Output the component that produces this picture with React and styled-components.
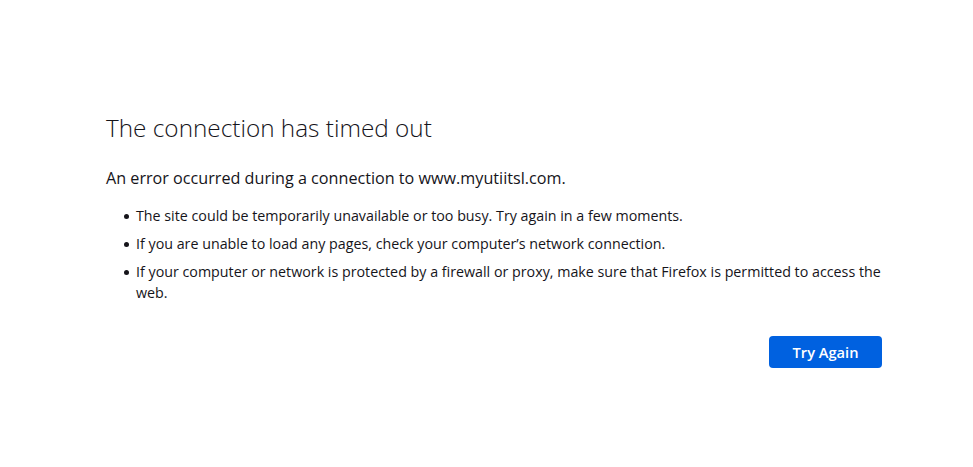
import React from "react";
import styled, { createGlobalStyle } from "styled-components";

const GlobalStyle = createGlobalStyle`
  html, body { margin: 0; padding: 0; background: #ffffff; }
  body {
    font-family: "Open Sans", "Noto Sans", sans-serif;
    color: #15141a;
  }
`;

const Page = styled.main`
  padding: 112px 0 0 106px;
`;

const Container = styled.div`
  width: 776px;
  display: flex;
  flex-direction: column;
`;

const Title = styled.h1`
  margin: 0;
  font-size: 24.34px;
  line-height: 32px;
  font-weight: 300;
  color: #15141a;
`;

const Subtitle = styled.p`
  margin: 23px 0 0;
  font-size: 16.17px;
  line-height: 22px;
  font-weight: 400;
`;

const List = styled.ul`
  margin: 16px 0 0;
  padding: 0 0 0 18px;
  list-style: none;
`;

const Item = styled.li`
  display: grid;
  grid-template-columns: 12px 1fr;
  font-size: 14.27px;
  line-height: 21px;
  margin-bottom: ${p => (p.$last ? 0 : 7)}px;
`;

const Dot = styled.span`
  width: 5px;
  height: 5px;
  margin-top: 9px;
  border-radius: 50%;
  background: #15141a;
`;

const Actions = styled.div`
  display: flex;
  justify-content: flex-end;
  margin-top: 33px;
`;

const Button = styled.button`
  height: 32px;
  padding: 0 23.5px;
  border: none;
  border-radius: 4px;
  background: #0061e0;
  color: #ffffff;
  font-family: "Open Sans", "Noto Sans", sans-serif;
  font-size: 14.66px;
  font-weight: 600;
  cursor: pointer;
`;

const items = [
  "The site could be temporarily unavailable or too busy. Try again in a few moments.",
  "If you are unable to load any pages, check your computer\u2019s network connection.",
  "If your computer or network is protected by a firewall or proxy, make sure that Firefox is permitted to access the web.",
];

export default function App() {
  return (
    <>
      <GlobalStyle />
      <Page>
        <Container>
          <Title>The connection has timed out</Title>
          <Subtitle>An error occurred during a connection to www.myutiitsl.com.</Subtitle>
          <List>
            {items.map((t, i) => (
              <Item key={i} $last={i === items.length - 1}>
                <Dot />
                <span>{t}</span>
              </Item>
            ))}
          </List>
          <Actions>
            <Button>Try Again</Button>
          </Actions>
        </Container>
      </Page>
    </>
  );
}
